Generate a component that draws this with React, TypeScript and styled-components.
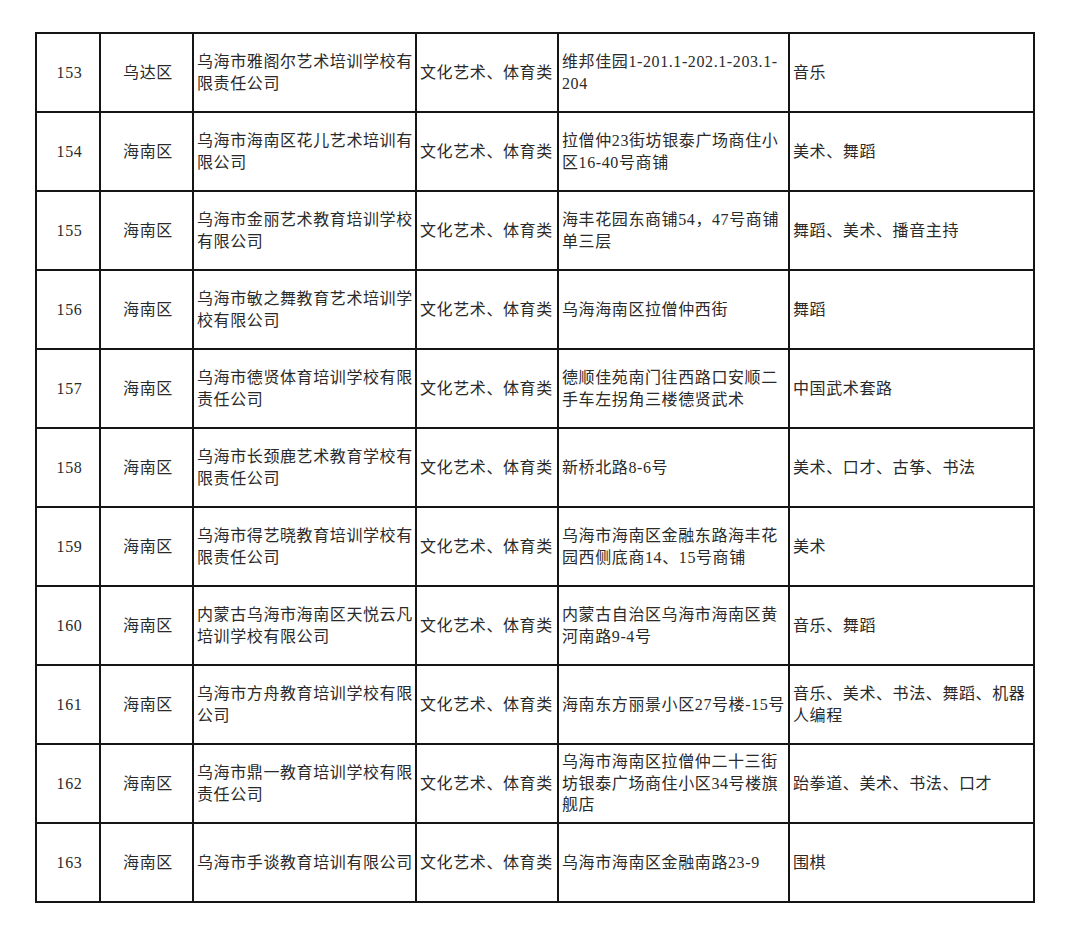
import styled, { createGlobalStyle } from "styled-components";

const GlobalStyle = createGlobalStyle`
  html, body {
    margin: 0;
    padding: 0;
    background: #fff;
  }
`;

const Page = styled.div`
  padding: 32px 0 0 35px;
  font-family: "Liberation Serif", "Noto Sans CJK SC", serif;
  color: #2a2a2a;
`;

const Table = styled.table`
  border-collapse: collapse;
  table-layout: fixed;
  width: 998px;
`;

const Row = styled.tr`
  height: 79px;
`;

const Cell = styled.td<{ $center?: boolean }>`
  border: 2px solid #151515;
  padding: 0 0 0 3px;
  font-size: 16px;
  letter-spacing: 0.6px;
  line-height: 21.5px;
  vertical-align: middle;
  text-align: ${(p) => (p.$center ? "center" : "left")};
  white-space: nowrap;
  overflow: hidden;
`;

const Line = styled.div``;

interface IRecord {
  no: number;
  area: string;
  name: string[];
  category: string;
  address: string[];
  subjects: string[];
}

const records: IRecord[] = [
  {
    no: 153,
    area: "乌达区",
    name: ["乌海市雅阁尔艺术培训学校有", "限责任公司"],
    category: "文化艺术、体育类",
    address: ["维邦佳园1-201.1-202.1-203.1-", "204"],
    subjects: ["音乐"],
  },
  {
    no: 154,
    area: "海南区",
    name: ["乌海市海南区花儿艺术培训有", "限公司"],
    category: "文化艺术、体育类",
    address: ["拉僧仲23街坊银泰广场商住小", "区16-40号商铺"],
    subjects: ["美术、舞蹈"],
  },
  {
    no: 155,
    area: "海南区",
    name: ["乌海市金丽艺术教育培训学校", "有限公司"],
    category: "文化艺术、体育类",
    address: ["海丰花园东商铺54，47号商铺", "单三层"],
    subjects: ["舞蹈、美术、播音主持"],
  },
  {
    no: 156,
    area: "海南区",
    name: ["乌海市敏之舞教育艺术培训学", "校有限公司"],
    category: "文化艺术、体育类",
    address: ["乌海海南区拉僧仲西街"],
    subjects: ["舞蹈"],
  },
  {
    no: 157,
    area: "海南区",
    name: ["乌海市德贤体育培训学校有限", "责任公司"],
    category: "文化艺术、体育类",
    address: ["德顺佳苑南门往西路口安顺二", "手车左拐角三楼德贤武术"],
    subjects: ["中国武术套路"],
  },
  {
    no: 158,
    area: "海南区",
    name: ["乌海市长颈鹿艺术教育学校有", "限责任公司"],
    category: "文化艺术、体育类",
    address: ["新桥北路8-6号"],
    subjects: ["美术、口才、古筝、书法"],
  },
  {
    no: 159,
    area: "海南区",
    name: ["乌海市得艺晓教育培训学校有", "限责任公司"],
    category: "文化艺术、体育类",
    address: ["乌海市海南区金融东路海丰花", "园西侧底商14、15号商铺"],
    subjects: ["美术"],
  },
  {
    no: 160,
    area: "海南区",
    name: ["内蒙古乌海市海南区天悦云凡", "培训学校有限公司"],
    category: "文化艺术、体育类",
    address: ["内蒙古自治区乌海市海南区黄", "河南路9-4号"],
    subjects: ["音乐、舞蹈"],
  },
  {
    no: 161,
    area: "海南区",
    name: ["乌海市方舟教育培训学校有限", "公司"],
    category: "文化艺术、体育类",
    address: ["海南东方丽景小区27号楼-15号"],
    subjects: ["音乐、美术、书法、舞蹈、机器", "人编程"],
  },
  {
    no: 162,
    area: "海南区",
    name: ["乌海市鼎一教育培训学校有限", "责任公司"],
    category: "文化艺术、体育类",
    address: ["乌海市海南区拉僧仲二十三街", "坊银泰广场商住小区34号楼旗", "舰店"],
    subjects: ["跆拳道、美术、书法、口才"],
  },
  {
    no: 163,
    area: "海南区",
    name: ["乌海市手谈教育培训有限公司"],
    category: "文化艺术、体育类",
    address: ["乌海市海南区金融南路23-9"],
    subjects: ["围棋"],
  },
];

const widths = [64, 93, 223, 142, 231, 245];

function Lines({ items }: { items: string[] }) {
  return (
    <>
      {items.map((t) => (
        <Line key={t}>{t}</Line>
      ))}
    </>
  );
}

function App() {
  return (
    <>
      <GlobalStyle />
      <Page>
        <Table>
          <colgroup>
            {widths.map((w, i) => (
              <col key={i} style={{ width: w }} />
            ))}
          </colgroup>
          <tbody>
            {records.map((r) => (
              <Row key={r.no}>
                <Cell $center>{r.no}</Cell>
                <Cell $center>{r.area}</Cell>
                <Cell>
                  <Lines items={r.name} />
                </Cell>
                <Cell>{r.category}</Cell>
                <Cell>
                  <Lines items={r.address} />
                </Cell>
                <Cell>
                  <Lines items={r.subjects} />
                </Cell>
              </Row>
            ))}
          </tbody>
        </Table>
      </Page>
    </>
  );
}

export default App;
